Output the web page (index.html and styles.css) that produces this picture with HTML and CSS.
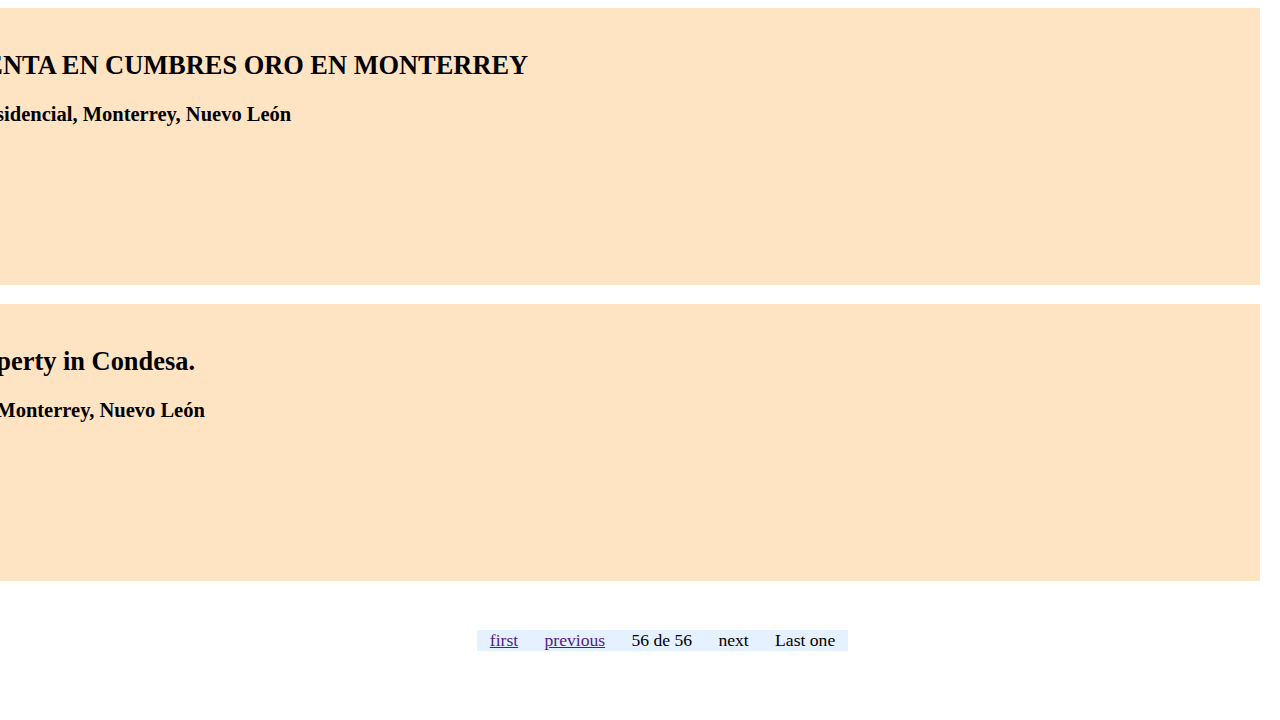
FILE: index.html
```html
<!DOCTYPE html>
<html lang="es">
<head>
<meta charset="utf-8">
<title>Propiedades</title>
<link rel="stylesheet" href="styles.css">
</head>
<body>
<main class="listing">
  <article class="card">
    <div class="card-body">
      <h2 class="card-title">CASA EN VENTA EN CUMBRES ORO EN MONTERREY</h2>
      <h3 class="card-place">Cumbres Oro Residencial, Monterrey, Nuevo León</h3>
    </div>
  </article>
  <article class="card">
    <div class="card-body">
      <h2 class="card-title">Beautiful property in Condesa.</h2>
      <h3 class="card-place">Colonia Colinas, Monterrey, Nuevo León</h3>
    </div>
  </article>
</main>
<ul class="pager">
  <li class="pager-item"><a href="#">first</a></li>
  <li class="pager-item"><a href="#">previous</a></li>
  <li class="pager-item">56 de 56</li>
  <li class="pager-item">next</li>
  <li class="pager-item">Last one</li>
</ul>
</body>
</html>
```
FILE: styles.css
```css
html {
  background: #ffffff;
}
body {
  margin: 8px 8px 8px 0;
  font-family: "Liberation Serif", "Times New Roman", serif;
  color: #000;
}
.listing {
  display: flex;
  flex-direction: column;
  gap: 19px;
}
.card {
  background: #ffe4c4;
  margin-right: 12px;
  min-height: 277px;
  box-sizing: border-box;
  overflow: hidden;
  white-space: nowrap;
}
.card-body {
  margin-left: -153.5px;
  padding-top: 42px;
}
.card-title {
  font-size: 26.4px;
  font-weight: bold;
  margin: 0 0 22px 0;
}
.card-place {
  font-size: 20.5px;
  font-weight: bold;
  margin: 0;
}
.pager {
  list-style: none;
  margin: 49px 0 0 0;
  padding: 0 0 0 53px;
  display: flex;
  justify-content: center;
}
.pager-item {
  background: #e6f1ff;
  font-size: 17.6px;
  padding: 0 13.2px;
}
.pager-item a {
  color: #551a8b;
}
```
